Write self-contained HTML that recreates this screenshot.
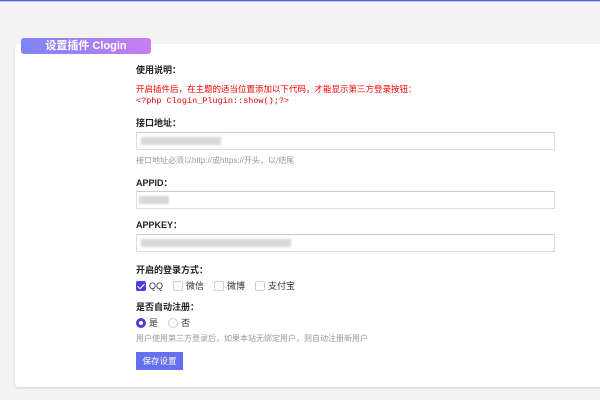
<!DOCTYPE html>
<html><head><meta charset="utf-8"><style>
*{margin:0;padding:0;box-sizing:border-box}
body{width:600px;height:400px;background:#f4f4f4;position:relative;overflow:hidden;font-family:"Liberation Sans","Noto Sans CJK SC",sans-serif;font-size:9px;color:#333}
.top{position:absolute;left:0;top:0;width:600px;height:2px;background:#5a62e0;border-bottom:1px solid #b9bdf3}
.card{position:absolute;left:15px;top:44px;width:600px;height:343px;background:#fff;border-radius:3px;box-shadow:0 1px 2px rgba(0,0,0,.15)}
.badge{position:absolute;left:21px;top:38px;width:130px;height:16px;border-radius:3px;background:linear-gradient(90deg,#7b85f6,#c97df1);color:#fff;font-weight:bold;font-size:11px;text-align:center;line-height:16px}
.t{position:absolute;left:136px;white-space:nowrap}
.b{font-weight:bold;color:#222}
.red{color:#f00;font-size:8.5px}
.mono{font-family:"Liberation Mono",monospace;color:#e00;font-size:8.5px}
.hint{color:#999;font-size:8px}
.in{position:absolute;left:136px;width:419px;height:18px;border:1px solid #ddd;border-top-color:#ccc;background:#fff}
.blur{position:absolute;top:4px;height:8px;background:#d8d8d8;filter:blur(1px)}
.cb{display:inline-block;width:10px;height:10px;border:1px solid #ccd;border-radius:2px;vertical-align:-2px;margin-right:3px;background:#fff}
.cb.on{background:#4b3fdd;border-color:#4b3fdd;position:relative}
.cb.on:after{content:"";position:absolute;left:2px;top:0px;width:3px;height:6px;border:solid #fff;border-width:0 1.5px 1.5px 0;transform:rotate(45deg)}
.rd{display:inline-block;width:10px;height:10px;border:1px solid #ccd;border-radius:50%;vertical-align:-2px;margin-right:3px}
.rd.on{border:3px solid #4b3fdd}
.btn{position:absolute;left:136px;top:352px;width:47px;height:18px;background:#6570ee;color:#fff;font-size:8.5px;text-align:center;line-height:18px}
</style></head><body>
<div class="top"></div>
<div class="card"></div>
<div class="badge">设置插件 Clogin</div>
<div class="t b" style="top:63px">使用说明：</div>
<div class="t red" style="top:83px">开启插件后，在主题的适当位置添加以下代码，才能显示第三方登录按钮：</div>
<div class="t mono" style="top:96px">&lt;?php Clogin_Plugin::show();?&gt;</div>
<div class="t b" style="top:116px">接口地址：</div>
<div class="in" style="top:132px"><div class="blur" style="left:4px;width:80px"></div></div>
<div class="t hint" style="top:155px">接口地址必须以http://或https://开头，以/结尾</div>
<div class="t b" style="top:176px">APPID：</div>
<div class="in" style="top:191px"><div class="blur" style="left:2px;width:30px"></div></div>
<div class="t b" style="top:218px">APPKEY：</div>
<div class="in" style="top:234px"><div class="blur" style="left:4px;width:150px"></div></div>
<div class="t b" style="top:263px">开启的登录方式：</div>
<div class="t" style="top:279px"><span class="cb on"></span>QQ&nbsp;&nbsp;&nbsp;&nbsp;<span class="cb"></span>微信&nbsp;&nbsp;&nbsp;&nbsp;<span class="cb"></span>微博&nbsp;&nbsp;&nbsp;&nbsp;<span class="cb"></span>支付宝</div>
<div class="t b" style="top:300px">是否自动注册：</div>
<div class="t" style="top:316px"><span class="rd on"></span>是&nbsp;&nbsp;&nbsp;&nbsp;<span class="rd"></span>否</div>
<div class="t hint" style="top:333px">用户使用第三方登录后，如果本站无绑定用户，则自动注册新用户</div>
<div class="btn">保存设置</div>
</body></html>
